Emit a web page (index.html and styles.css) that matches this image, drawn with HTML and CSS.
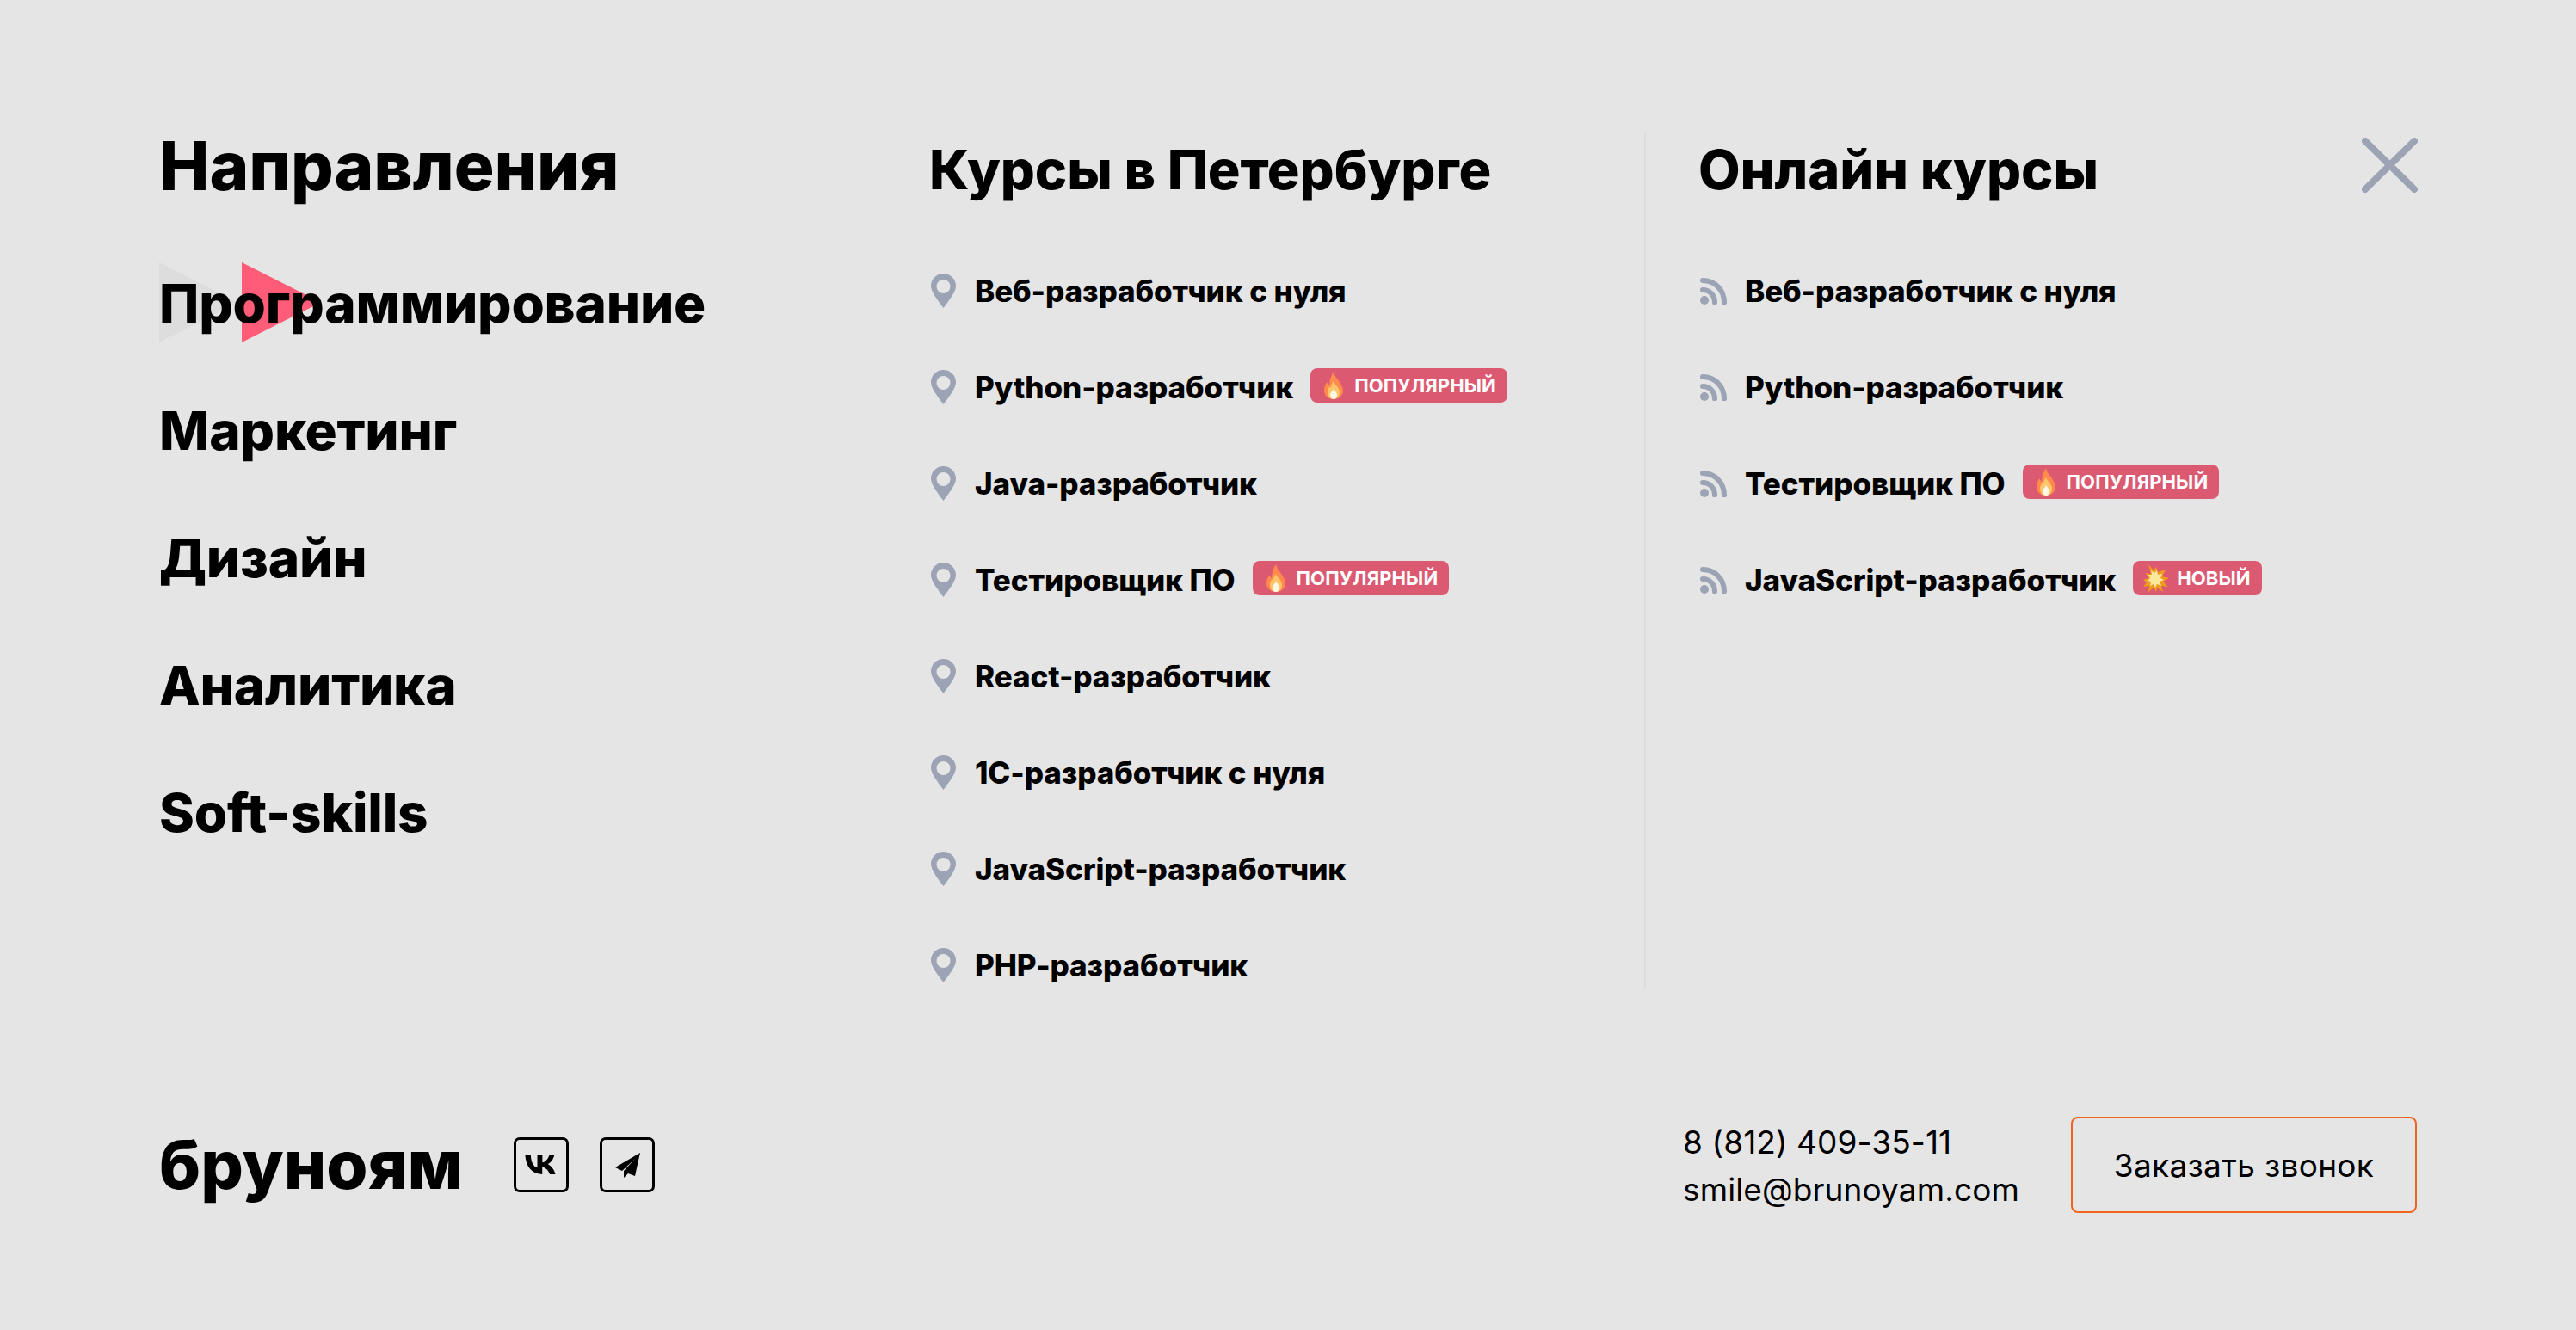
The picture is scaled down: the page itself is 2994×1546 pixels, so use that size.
FILE: index.html
```html
<!DOCTYPE html>
<html lang="ru">
<head>
  <meta charset="UTF-8">
  <title>Бруноям — меню</title>
  <link rel="stylesheet" href="styles.css">
</head>
<body>
  <svg class="defs" width="0" height="0">
    <symbol id="pin" viewBox="0 0 29 40">
      <path fill-rule="evenodd" d="M14.500 0C6.500 0 0 6.400 0 14.300c0 7 7.500 16.500 14.500 25.700C21.500 30.800 29 21.300 29 14.300 29 6.400 22.500 0 14.500 0zm0 7a8 8 0 1 1 0 16 8 8 0 0 1 0-16z"/>
    </symbol>
    <symbol id="rss" viewBox="0 0 31 31">
      <circle cx="5" cy="26" r="5"/>
      <path d="M3 14c8 0 14 6 14 14.500M3 3c14 0 25 11 25 25.500" fill="none" stroke="currentColor" stroke-width="6" stroke-linecap="round"/>
    </symbol>
    <symbol id="fire" viewBox="0 0 22 32">
      <path fill="#ff8a4c" d="M11 0c1 6 5 8 8 14 1 2 3 4 3 8 0 6-5 10-11 10S0 28 0 22c0-5 2-7 3-10 1 2 2 3 3 4 0-6 2-11 5-16z"/>
      <path fill="#ffc56b" d="M11 11c1 4 7 7 7 13 0 5-3 8-7 8s-7-3-7-8c0-3 1-5 3-7 0 1 1 2 1 2 0-3 1-6 3-8z"/>
      <path fill="#fff8e6" d="M11 20c1 2 4 4 4 7 0 3-2 5-4 5s-4-2-4-5 3-4 4-7z"/>
    </symbol>
    <symbol id="boom" viewBox="0 0 30 32">
      <path fill="#f09a1e" d="M6 0l6 7 3-4 2 6 9-3-4 8 8 2-7 4 6 6-8-1 2 7-7-5-1 5-3-5-6 5 1-7-7 1 4-5-4-3 6-2-3-6 6 1z"/>
      <path fill="#fbe89a" d="M9 7l4 3 3-3 1 5 5-1-2 5 4 2-5 2 2 5-5-2-2 4-2-4-4 2 1-5-4-1 3-3-2-4 4 0z"/>
    </symbol>
  </svg>

  <div class="page">
    <main class="menu">
      <a class="close" href="#" aria-label="Закрыть">
        <svg width="65" height="64" viewBox="0 0 65 64"><path d="M4 4l57 56M61 4L4 60"/></svg>
      </a>

      <section class="directions">
        <h2 class="directions-title">Направления</h2>
        <ul class="directions-list">
          <li class="direction">
            <svg class="arrows" width="188" height="93" viewBox="0 0 188 93">
              <path fill="#dddddd" d="M0 0l92 46.500L0 93z"/>
              <path fill="#ff5c78" d="M96 0l92 46.500L96 93z"/>
            </svg>
            <span>Программирование</span>
          </li>
          <li class="direction"><span>Маркетинг</span></li>
          <li class="direction"><span>Дизайн</span></li>
          <li class="direction"><span>Аналитика</span></li>
          <li class="direction"><span>Soft-skills</span></li>
        </ul>
      </section>

      <section class="courses courses-city">
        <h2 class="courses-title">Курсы в Петербурге</h2>
        <ul class="course-list">
          <li class="course"><svg class="ico-pin"><use href="#pin"/></svg><span>Веб-разработчик с нуля</span></li>
          <li class="course"><svg class="ico-pin"><use href="#pin"/></svg><span>Python-разработчик</span>
            <span class="badge"><svg class="badge-ico"><use href="#fire"/></svg>ПОПУЛЯРНЫЙ</span></li>
          <li class="course"><svg class="ico-pin"><use href="#pin"/></svg><span>Java-разработчик</span></li>
          <li class="course"><svg class="ico-pin"><use href="#pin"/></svg><span>Тестировщик ПО</span>
            <span class="badge"><svg class="badge-ico"><use href="#fire"/></svg>ПОПУЛЯРНЫЙ</span></li>
          <li class="course"><svg class="ico-pin"><use href="#pin"/></svg><span>React-разработчик</span></li>
          <li class="course"><svg class="ico-pin"><use href="#pin"/></svg><span>1С-разработчик с нуля</span></li>
          <li class="course"><svg class="ico-pin"><use href="#pin"/></svg><span>JavaScript-разработчик</span></li>
          <li class="course"><svg class="ico-pin"><use href="#pin"/></svg><span>PHP-разработчик</span></li>
        </ul>
      </section>

      <section class="courses courses-online">
        <h2 class="courses-title">Онлайн курсы</h2>
        <ul class="course-list">
          <li class="course"><svg class="ico-rss"><use href="#rss"/></svg><span>Веб-разработчик с нуля</span></li>
          <li class="course"><svg class="ico-rss"><use href="#rss"/></svg><span>Python-разработчик</span></li>
          <li class="course"><svg class="ico-rss"><use href="#rss"/></svg><span>Тестировщик ПО</span>
            <span class="badge"><svg class="badge-ico"><use href="#fire"/></svg>ПОПУЛЯРНЫЙ</span></li>
          <li class="course"><svg class="ico-rss"><use href="#rss"/></svg><span>JavaScript-разработчик</span>
            <span class="badge"><svg class="badge-ico badge-ico-boom"><use href="#boom"/></svg>НОВЫЙ</span></li>
        </ul>
      </section>
    </main>

    <footer class="footer">
      <div class="logo">бруноям</div>
      <div class="socials">
        <a class="social" href="#" aria-label="VK">
          <svg width="39" height="22" viewBox="0 0 26 15"><path d="M14 15C5.500 15 .6 9.200 0 0h4.400c.2 6.500 3 9.300 5.200 9.800V0h4v5.600c2.300-.2 4.600-2.800 5.400-5.600h4c-.7 3.400-3.200 6-5 7 1.800.9 4.700 3.200 5.900 8h-4.400c-1-3-3.300-5.300-6-5.600V15z"/></svg>
        </a>
        <a class="social" href="#" aria-label="Telegram">
          <svg width="29" height="29" viewBox="0 0 29 29"><path d="M29 0L0 17l8 4L23 7 10 21v8l5-5 8 3z"/></svg>
        </a>
      </div>
      <div class="contacts">
        <div>8 (812) 409-35-11</div>
        <div>smile@brunoyam.com</div>
      </div>
      <a class="call" href="#">Заказать звонок</a>
    </footer>
  </div>
</body>
</html>
```

FILE: styles.css
```css
* {
  box-sizing: border-box;
}
body {
  margin: 0;
  background: #e5e5e5;
  color: #000;
  font-family: Inter, "Liberation Sans", sans-serif;
}
ul {
  list-style: none;
  margin: 0;
  padding: 0;
}
a {
  color: inherit;
  text-decoration: none;
}
.defs {
  position: absolute;
}
.page {
  display: flex;
  flex-direction: column;
  justify-content: space-between;
  height: 100vh;
  padding: 155px 185px 136px;
}

.menu {
  position: relative;
  display: flex;
  align-items: flex-start;
}
.close {
  position: absolute;
  top: 5px;
  right: -1px;
  line-height: 0;
}
.close path {
  fill: none;
  stroke: #9ca3b4;
  stroke-width: 8;
  stroke-linecap: round;
}

.directions {
  width: 895px;
}
.directions-title {
  margin: 0 0 86px;
  font-size: 78px;
  line-height: 76px;
  font-weight: 800;
}
.directions-list {
  display: flex;
  flex-direction: column;
  gap: 76px;
}
.direction {
  position: relative;
  font-size: 62px;
  line-height: 72px;
  font-weight: 800;
  letter-spacing: -0.2px;
}
.direction span {
  position: relative;
}
.arrows {
  position: absolute;
  left: 0;
  top: -12px;
}

.courses-title {
  margin: 0 0 71px;
  font-size: 63px;
  line-height: 84px;
  font-weight: 800;
  letter-spacing: -0.1px;
}
.courses-city {
  width: 833px;
  height: 993px;
  border-right: 2px solid #dcdcdc;
}
.courses-online {
  padding-left: 61px;
}
.course-list {
  display: flex;
  flex-direction: column;
  gap: 56px;
}
.course {
  display: flex;
  align-items: center;
  height: 56px;
  font-size: 35px;
  font-weight: 800;
  letter-spacing: -0.1px;
}
.ico-pin {
  width: 29px;
  height: 40px;
  margin-left: 2px;
  margin-right: 22px;
  fill: #9ca3b4;
}
.ico-rss {
  width: 31px;
  height: 31px;
  margin-left: 2px;
  margin-right: 21px;
  fill: #9ca3b4;
  color: #9ca3b4;
}
.badge {
  display: flex;
  align-items: center;
  height: 40px;
  margin-left: 20px;
  margin-top: -4px;
  padding: 0 13px 0 16px;
  background: #db5a72;
  border-radius: 8px;
  color: #fff;
  font-size: 22px;
  font-weight: 700;
  letter-spacing: 0.1px;
}
.badge-ico {
  width: 22px;
  height: 32px;
  margin-right: 13px;
}
.badge-ico-boom {
  width: 30px;
  margin-left: -4px;
  margin-right: 9px;
}

.footer {
  display: flex;
  align-items: center;
}
.logo {
  width: 352px;
  font-size: 78px;
  line-height: 112px;
  font-weight: 800;
}
.socials {
  display: flex;
  gap: 36px;
  margin-left: 60px;
  margin-right: auto;
}
.social {
  display: flex;
  align-items: center;
  justify-content: center;
  width: 64px;
  height: 64px;
  border: 3px solid #000;
  border-radius: 7px;
}
.contacts {
  font-size: 37px;
  line-height: 55px;
  margin-top: 2px;
  margin-right: 60px;
  letter-spacing: 0.1px;
}
.call {
  display: flex;
  align-items: center;
  justify-content: center;
  width: 402px;
  height: 112px;
  border: 2px solid #f0641e;
  border-radius: 8px;
  font-size: 37px;
  letter-spacing: 0.3px;
}
```
